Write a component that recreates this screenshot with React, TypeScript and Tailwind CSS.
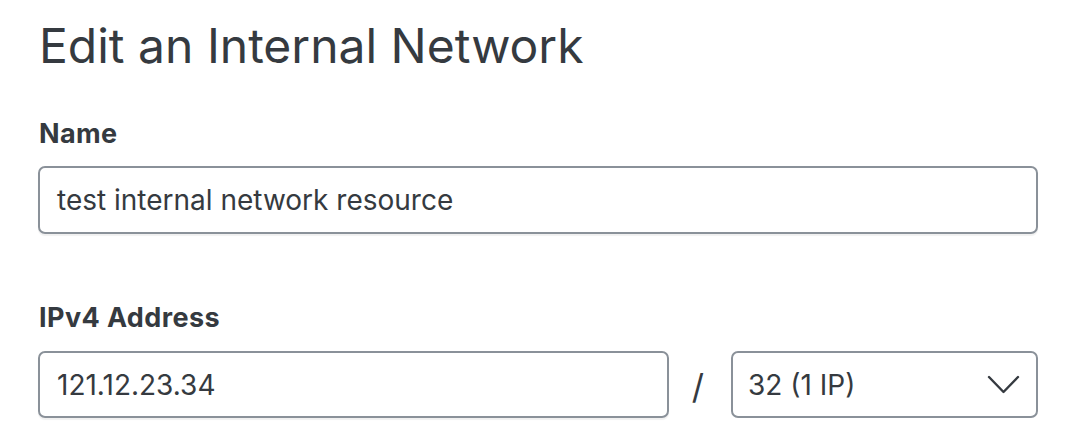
import React from "react";

export default function App() {
  return (
    <div className="w-[1068px] h-[448px] bg-white overflow-hidden" style={{ fontFamily: "Inter, 'Noto Sans', sans-serif" }}>
      <div className="pl-[38px] pr-[30px] pt-[17px] text-[#353a40]">
        <h1 className="text-[48px] leading-[58px] font-normal pl-[1px]">Edit an Internal Network</h1>

        <label className="block mt-[43px] text-[27px] leading-[32px] font-bold tracking-[0.4px] pl-[1px]">Name</label>
        <div className="mt-[16px] h-[68px] w-[1000px] rounded-[7px] border-2 border-[#8a9199] shadow-[0_2px_1px_rgba(0,0,0,0.06)] flex items-center pl-[17px]">
          <span className="text-[28px] leading-[32px]">test internal network resource</span>
        </div>

        <label className="block mt-[68px] text-[27px] leading-[32px] font-bold tracking-[0.4px] pl-[1px]">IPv4 Address</label>
        <div className="mt-[17px] flex items-center w-[1000px]">
          <div className="h-[67px] w-[631px] rounded-[7px] border-2 border-[#8a9199] shadow-[0_2px_1px_rgba(0,0,0,0.06)] flex items-center pl-[17px]">
            <span className="text-[28px] leading-[32px]">121.12.23.34</span>
          </div>
          <div className="w-[62px] flex justify-center text-[34px] leading-[36px] pt-[4px] pr-[4px]">/</div>
          <div className="h-[67px] flex-1 rounded-[7px] border-2 border-[#8a9199] flex items-center justify-between pl-[15px] pr-[16px]">
            <span className="text-[28px] leading-[32px]">32 (1 IP)</span>
            <svg width="33" height="20" viewBox="0 0 33 20" fill="none">
              <path d="M2 2 L16.5 17 L31 2" stroke="#353a40" strokeWidth="2.4" strokeLinecap="round" strokeLinejoin="round" />
            </svg>
          </div>
        </div>
      </div>
    </div>
  );
}
